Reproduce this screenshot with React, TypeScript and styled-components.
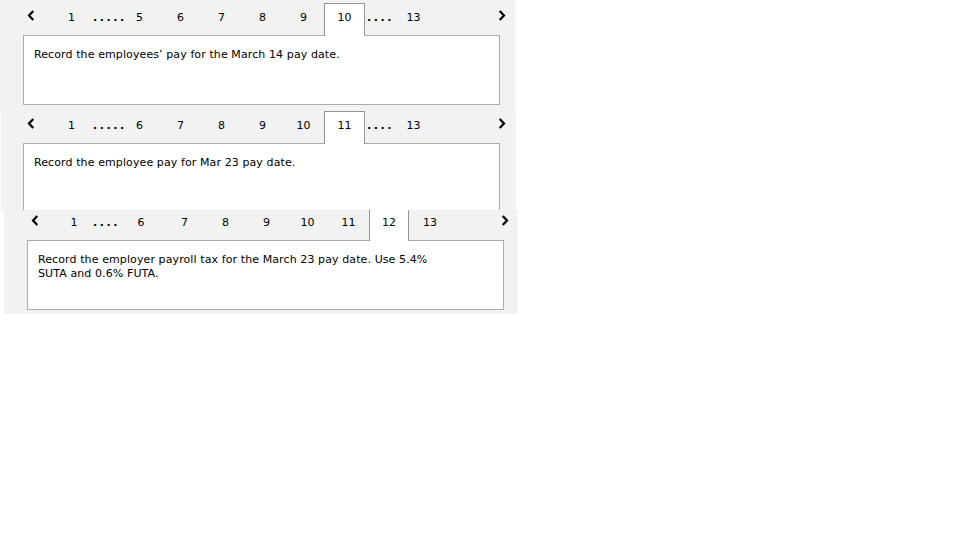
import React from "react";
import styled, { createGlobalStyle } from "styled-components";

const Global = createGlobalStyle`
  html, body { margin: 0; padding: 0; background: #ffffff; }
  body { font-family: "DejaVu Sans", Verdana, sans-serif; color: #000; }
`;

type Item =
  | { kind: "tab"; label: string; w: number }
  | { kind: "dots"; label: string; w: number; pl: number };

interface ShotData {
  x: number;
  w: number;
  h: number;
  pl: number;
  pt: number;
  crop: number;
  prevW: number;
  nextMr: number;
  selected: string;
  items: Item[];
  text: string;
  textMax?: number;
}

const t = (label: string, w = 41): Item => ({ kind: "tab", label, w });
const d = (label: string, w: number, pl = 2): Item => ({ kind: "dots", label, w, pl });

const shots: ShotData[] = [
  {
    x: 0, w: 515, h: 111, pl: 23, pt: 3, crop: 0, prevW: 28, nextMr: -6,
    selected: "10",
    items: [t("1"), d(".....", 27, 1), t("5"), t("6"), t("7"), t("8"), t("9"), t("10"), d("....", 28, 2), t("13")],
    text: "Record the employees\u2019 pay for the March 14 pay date.",
  },
  {
    x: 1, w: 515, h: 99, pl: 22, pt: 0, crop: 0, prevW: 28, nextMr: -6,
    selected: "11",
    items: [t("1"), d(".....", 27, 1), t("6"), t("7"), t("8"), t("9"), t("10"), t("11"), d("....", 28, 2), t("13")],
    text: "Record the employee pay for Mar 23 pay date.",
  },
  {
    x: 4, w: 514, h: 104, pl: 23, pt: 0, crop: 2, prevW: 28, nextMr: -5,
    selected: "12",
    items: [t("1", 38), d("....", 25, 0), t("6", 46), t("7"), t("8"), t("9"), t("10"), t("11"), t("12", 40), t("13", 42)],
    text: "Record the employer payroll tax for the March 23 pay date. Use 5.4% SUTA and 0.6% FUTA.",
    textMax: 410,
  },
];

const Page = styled.div`
  display: flex;
  flex-direction: column;
  align-items: flex-start;
`;

const Shot = styled.section<{ $x: number; $w: number; $h: number; $pl: number }>`
  margin-left: ${(p) => p.$x}px;
  width: ${(p) => p.$w}px;
  height: ${(p) => p.$h}px;
  padding-left: ${(p) => p.$pl}px;
  box-sizing: border-box;
  background: #f2f2f2;
  overflow: hidden;
`;

const ShotInner = styled.div<{ $crop: number; $pt: number }>`
  margin-top: ${(p) => -p.$crop}px;
  padding-top: ${(p) => p.$pt}px;
  display: flex;
  flex-direction: column;
`;

const TabRow = styled.div`
  display: flex;
  align-items: flex-start;
  height: 32px;
  width: 477px;
  font-size: 11px;
  line-height: 13px;
`;

const NavButton = styled.div<{ $w?: number; $mr?: number }>`
  width: ${(p) => p.$w ?? 8}px;
  margin-right: ${(p) => p.$mr ?? 0}px;
  padding-top: 7px;
  padding-left: 4px;
  box-sizing: border-box;
  display: flex;
  flex-shrink: 0;
  svg { display: block; }
`;

const NextButton = styled(NavButton)`
  margin-left: auto;
  padding-left: 0;
`;

const Tab = styled.div<{ $w: number; $selected: boolean }>`
  width: ${(p) => p.$w}px;
  flex-shrink: 0;
  box-sizing: border-box;
  height: ${(p) => (p.$selected ? 33 : 32)}px;
  margin-bottom: ${(p) => (p.$selected ? -1 : 0)}px;
  position: relative;
  z-index: ${(p) => (p.$selected ? 1 : 0)};
  border: 1px solid ${(p) => (p.$selected ? "#959595" : "transparent")};
  border-bottom: none;
  background: ${(p) => (p.$selected ? "#ffffff" : "transparent")};
  text-align: center;
  padding-top: 7px;
`;

const Dots = styled.div<{ $w: number; $pl: number }>`
  width: ${(p) => p.$w}px;
  flex-shrink: 0;
  padding-top: 8px;
  padding-left: ${(p) => p.$pl}px;
  box-sizing: border-box;
  font-weight: bold;
  letter-spacing: 2.6px;
  white-space: nowrap;
  overflow: visible;
`;

const Prompt = styled.div`
  width: 477px;
  height: 70px;
  box-sizing: border-box;
  border: 1px solid #ababab;
  background: #ffffff;
  padding: 12px 10px 0 10px;
`;

const PromptText = styled.p<{ $max?: number }>`
  margin: 0;
  font-size: 11px;
  line-height: 14px;
  letter-spacing: 0.1px;
  max-width: ${(p) => (p.$max ? `${p.$max}px` : "none")};
`;

const Chevron = ({ dir }: { dir: "left" | "right" }) => (
  <svg width="8" height="11" viewBox="0 0 8 11">
    <path
      d={dir === "left" ? "M6.3 1 L2 5.5 L6.3 10" : "M1.7 1 L6 5.5 L1.7 10"}
      fill="none"
      stroke="#000"
      strokeWidth="2.2"
      strokeLinecap="butt"
      strokeLinejoin="miter"
    />
  </svg>
);

const PagerShot = ({ s }: { s: ShotData }) => (
  <Shot $x={s.x} $w={s.w} $h={s.h} $pl={s.pl}>
    <ShotInner $crop={s.crop} $pt={s.pt}>
      <TabRow>
        <NavButton $w={s.prevW}>
          <Chevron dir="left" />
        </NavButton>
        {s.items.map((it, i) =>
          it.kind === "tab" ? (
            <Tab key={i} $w={it.w} $selected={it.label === s.selected}>
              {it.label}
            </Tab>
          ) : (
            <Dots key={i} $w={it.w} $pl={it.pl}>
              {it.label}
            </Dots>
          )
        )}
        <NextButton $mr={s.nextMr}>
          <Chevron dir="right" />
        </NextButton>
      </TabRow>
      <Prompt>
        <PromptText $max={s.textMax}>{s.text}</PromptText>
      </Prompt>
    </ShotInner>
  </Shot>
);

export default function App() {
  return (
    <>
      <Global />
      <Page>
        {shots.map((s, i) => (
          <PagerShot key={i} s={s} />
        ))}
      </Page>
    </>
  );
}
